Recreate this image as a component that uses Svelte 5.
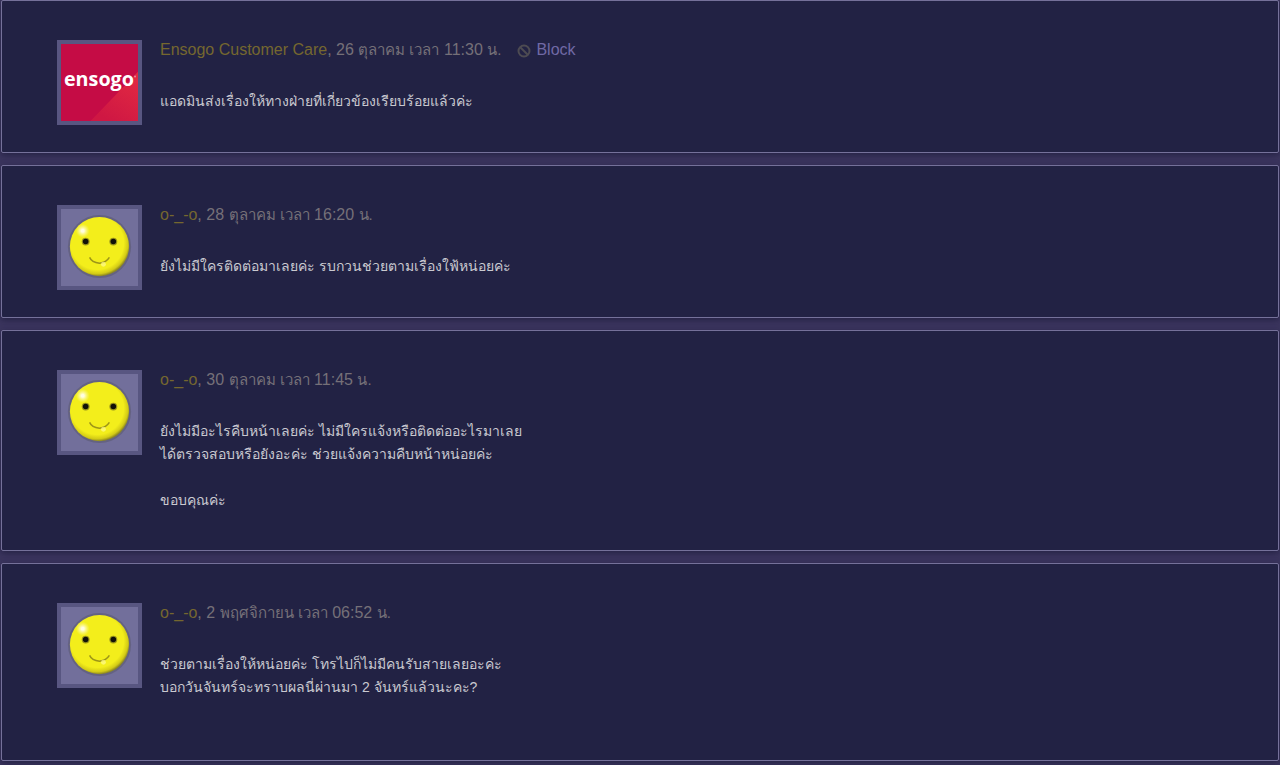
<script>
  const replies = [
    {
      author: 'Ensogo Customer Care',
      day: 26,
      month: 'ตุลาคม',
      clock: '11:30',
      avatar: 'ensogo',
      canBlock: true,
      message: 'แอดมินส่งเรื่องให้ทางฝ่ายที่เกี่ยวข้องเรียบร้อยแล้วค่ะ'
    },
    {
      author: 'o-_-o',
      day: 28,
      month: 'ตุลาคม',
      clock: '16:20',
      avatar: 'smiley',
      message: 'ยังไม่มีใครติดต่อมาเลยค่ะ รบกวนช่วยตามเรื่องใฟ้หน่อยค่ะ'
    },
    {
      author: 'o-_-o',
      day: 30,
      month: 'ตุลาคม',
      clock: '11:45',
      avatar: 'smiley',
      message: 'ยังไม่มีอะไรคืบหน้าเลยค่ะ ไม่มีใครแจ้งหรือติดต่ออะไรมาเลย\nได้ตรวจสอบหรือยังอะค่ะ ช่วยแจ้งความคืบหน้าหน่อยค่ะ\n\nขอบคุณค่ะ'
    },
    {
      author: 'o-_-o',
      day: 2,
      month: 'พฤศจิกายน',
      clock: '06:52',
      avatar: 'smiley',
      message: 'ช่วยตามเรื่องให้หน่อยค่ะ โทรไปก็ไม่มีคนรับสายเลยอะค่ะ\nบอกวันจันทร์จะทราบผลนี่ผ่านมา 2 จันทร์แล้วนะคะ?\n\n'
    }
  ];
</script>

<main class="replies">
  {#each replies as reply}
    <article class="reply">
      <a class="avatar" href="#profile" aria-label={reply.author}>
        {#if reply.avatar === 'ensogo'}
          <svg viewBox="0 0 78 78">
            <defs>
              <linearGradient id="fold" x1="1" y1="0" x2="0.4" y2="1">
                <stop offset="0" stop-color="#e32b42" />
                <stop offset="1" stop-color="#cf1743" />
              </linearGradient>
            </defs>
            <rect width="78" height="78" fill="#c50c45" />
            <path d="M78 28V78H30Z" fill="url(#fold)" />
            <text class="logo" x="3" y="43">ensogo</text>
            <circle cx="75" cy="33" r="1" fill="#e88aa0" />
          </svg>
        {:else}
          <svg viewBox="0 0 78 78">
            <defs>
              <radialGradient id="face" cx="0.46" cy="0.44" r="0.56">
                <stop offset="0.8" stop-color="#f3ee1b" />
                <stop offset="0.93" stop-color="#d3cb16" />
                <stop offset="1" stop-color="#8d8722" />
              </radialGradient>
              <radialGradient id="shine">
                <stop offset="0.2" stop-color="#fffde0" />
                <stop offset="1" stop-color="#fffb90" stop-opacity="0" />
              </radialGradient>
            </defs>
            <rect width="78" height="78" fill="#726f9b" />
            <circle cx="39" cy="38" r="32" fill="#5c5a72" opacity="0.6" />
            <circle cx="39" cy="38" r="30" fill="url(#face)" />
            <circle cx="22" cy="22" r="7" fill="url(#shine)" />
            <circle cx="25" cy="33" r="4" fill="#9b9618" />
            <circle cx="53" cy="33" r="4" fill="#9b9618" />
            <circle cx="25" cy="33" r="2.8" fill="#111108" />
            <circle cx="53" cy="33" r="2.8" fill="#111108" />
            <path d="M29 49Q31 54 39 55Q46 54 49 49" fill="none" stroke="#9d9518" stroke-width="1.5" />
            <circle cx="43" cy="56" r="2.5" fill="#fffb90" opacity="0.7" />
          </svg>
        {/if}
      </a>
      <div class="content">
        <header class="meta">
          <span>
            <a class="author" href="#profile">{reply.author}</a>, {reply.day}
            <span class="thai">{reply.month} เวลา</span>
            {reply.clock}
            <span class="thai">น.</span>
          </span>
          {#if reply.canBlock}
            <button class="block" type="button">
              <svg viewBox="0 0 14 14" width="14" height="14">
                <circle cx="7" cy="7" r="5.5" />
                <path d="M3 3L11 11" />
              </svg>
              Block
            </button>
          {/if}
        </header>
        <p class="message">{reply.message}</p>
      </div>
    </article>
  {/each}
</main>

<style>
  :global(body) {
    margin: 0;
    background: #3b355e;
  }

  .replies {
    display: flex;
    flex-direction: column;
    gap: 12px;
    padding: 0 1px 4px;
    font-family: "Liberation Sans", Arial, sans-serif;
  }

  .reply {
    display: flex;
    gap: 18px;
    box-sizing: border-box;
    padding: 39px 55px 27px;
    border: 1px solid #75719a;
    border-radius: 2px;
    background: #222244;
    box-shadow: 0 2px 6px rgba(20, 20, 50, 0.6);
  }

  .avatar {
    flex: none;
    box-sizing: border-box;
    width: 85px;
    height: 85px;
    border: 4px solid #585681;
  }

  .avatar svg {
    display: block;
    width: 100%;
    height: 100%;
  }

  .logo {
    font: bold 20px "Open Sans", "Noto Sans", sans-serif;
    fill: #fff;
  }

  .content {
    flex: 1;
    min-width: 0;
    padding-bottom: 11px;
  }

  .meta {
    display: flex;
    gap: 16px;
    height: 20px;
    font-size: 16px;
    line-height: 20px;
    color: #757078;
  }

  /* thai glyphs run wide next to the latin digits */
  .thai {
    font-size: 15px;
  }

  .author {
    color: #75672f;
    text-decoration: none;
  }

  .block {
    display: flex;
    align-items: center;
    gap: 5px;
    padding: 0;
    border: 0;
    background: none;
    font: inherit;
    color: #7069a5;
    cursor: pointer;
  }

  .block svg {
    margin-top: 2px;
    fill: none;
    stroke: #4d4b52;
    stroke-width: 2;
  }

  .message {
    margin: 30px 0 0;
    font-size: 14px;
    line-height: 23px;
    color: #c9c9d0;
    white-space: pre-wrap;
  }
</style>
